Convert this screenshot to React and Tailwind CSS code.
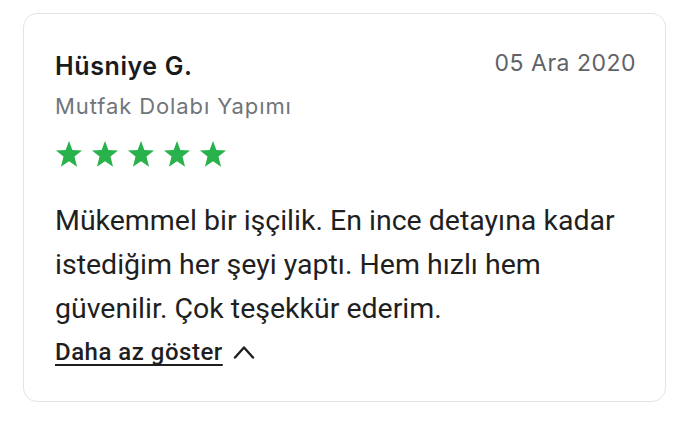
import React from 'react';

const Star = () => (
  <svg width="28" height="27" viewBox="0 0 24 23" preserveAspectRatio="none" className="text-[#29b24c]">
    <path fill="currentColor" d="M12 0l2.9 7.7 8.3.4-6.5 5.2 2.2 8.7L12 17.2 5.1 22l2.2-8.7L.8 8.1l8.3-.4z" />
  </svg>
);

export default function App() {
  return (
    <div className="w-[696px] h-[424px] bg-white pl-[23px] pr-[30px] pt-[13px]">
      <div className="h-[389px] rounded-[14px] border border-[#e4e4e4] bg-white pl-[31px] pr-[29px] pt-[37px]">
        <div className="flex items-start justify-between font-['Inter',sans-serif]">
          <div>
            <h2 className="text-[25px] leading-[30px] font-semibold text-[#1b1b1b] tracking-[0.6px]">Hüsniye G.</h2>
            <p className="mt-[13px] text-[22px] leading-[24px] text-[#70757a] tracking-[0.9px]">Mutfak Dolabı Yapımı</p>
          </div>
          <span className="text-[23px] leading-[24px] text-[#5f6368] tracking-[0.5px]">05 Ara 2020</span>
        </div>
        <div className="mt-[23px] flex gap-[8px]">
          <Star /><Star /><Star /><Star /><Star />
        </div>
        <p className="mt-[31px] font-['Roboto',sans-serif] text-[28.5px] leading-[44px] text-[#1f1f1f]">
          Mükemmel bir işçilik. En ince detayına kadar istediğim her şeyi yaptı. Hem hızlı hem güvenilir. Çok teşekkür ederim.
        </p>
        <button className="mt-[6px] flex items-center gap-[10px] font-['Roboto',sans-serif] text-[24px] leading-[30px] font-medium text-[#1f1f1f]">
          <span className="underline underline-offset-[4px] decoration-[1.5px] [text-decoration-skip-ink:none] tracking-[0.5px]">Daha az göster</span>
          <svg width="22" height="14" viewBox="0 0 22 14" fill="none" stroke="#1f1f1f" strokeWidth="2.4" strokeLinecap="round" strokeLinejoin="round">
            <path d="M2 12.5L11 2.5l9 10" />
          </svg>
        </button>
      </div>
    </div>
  );
}
